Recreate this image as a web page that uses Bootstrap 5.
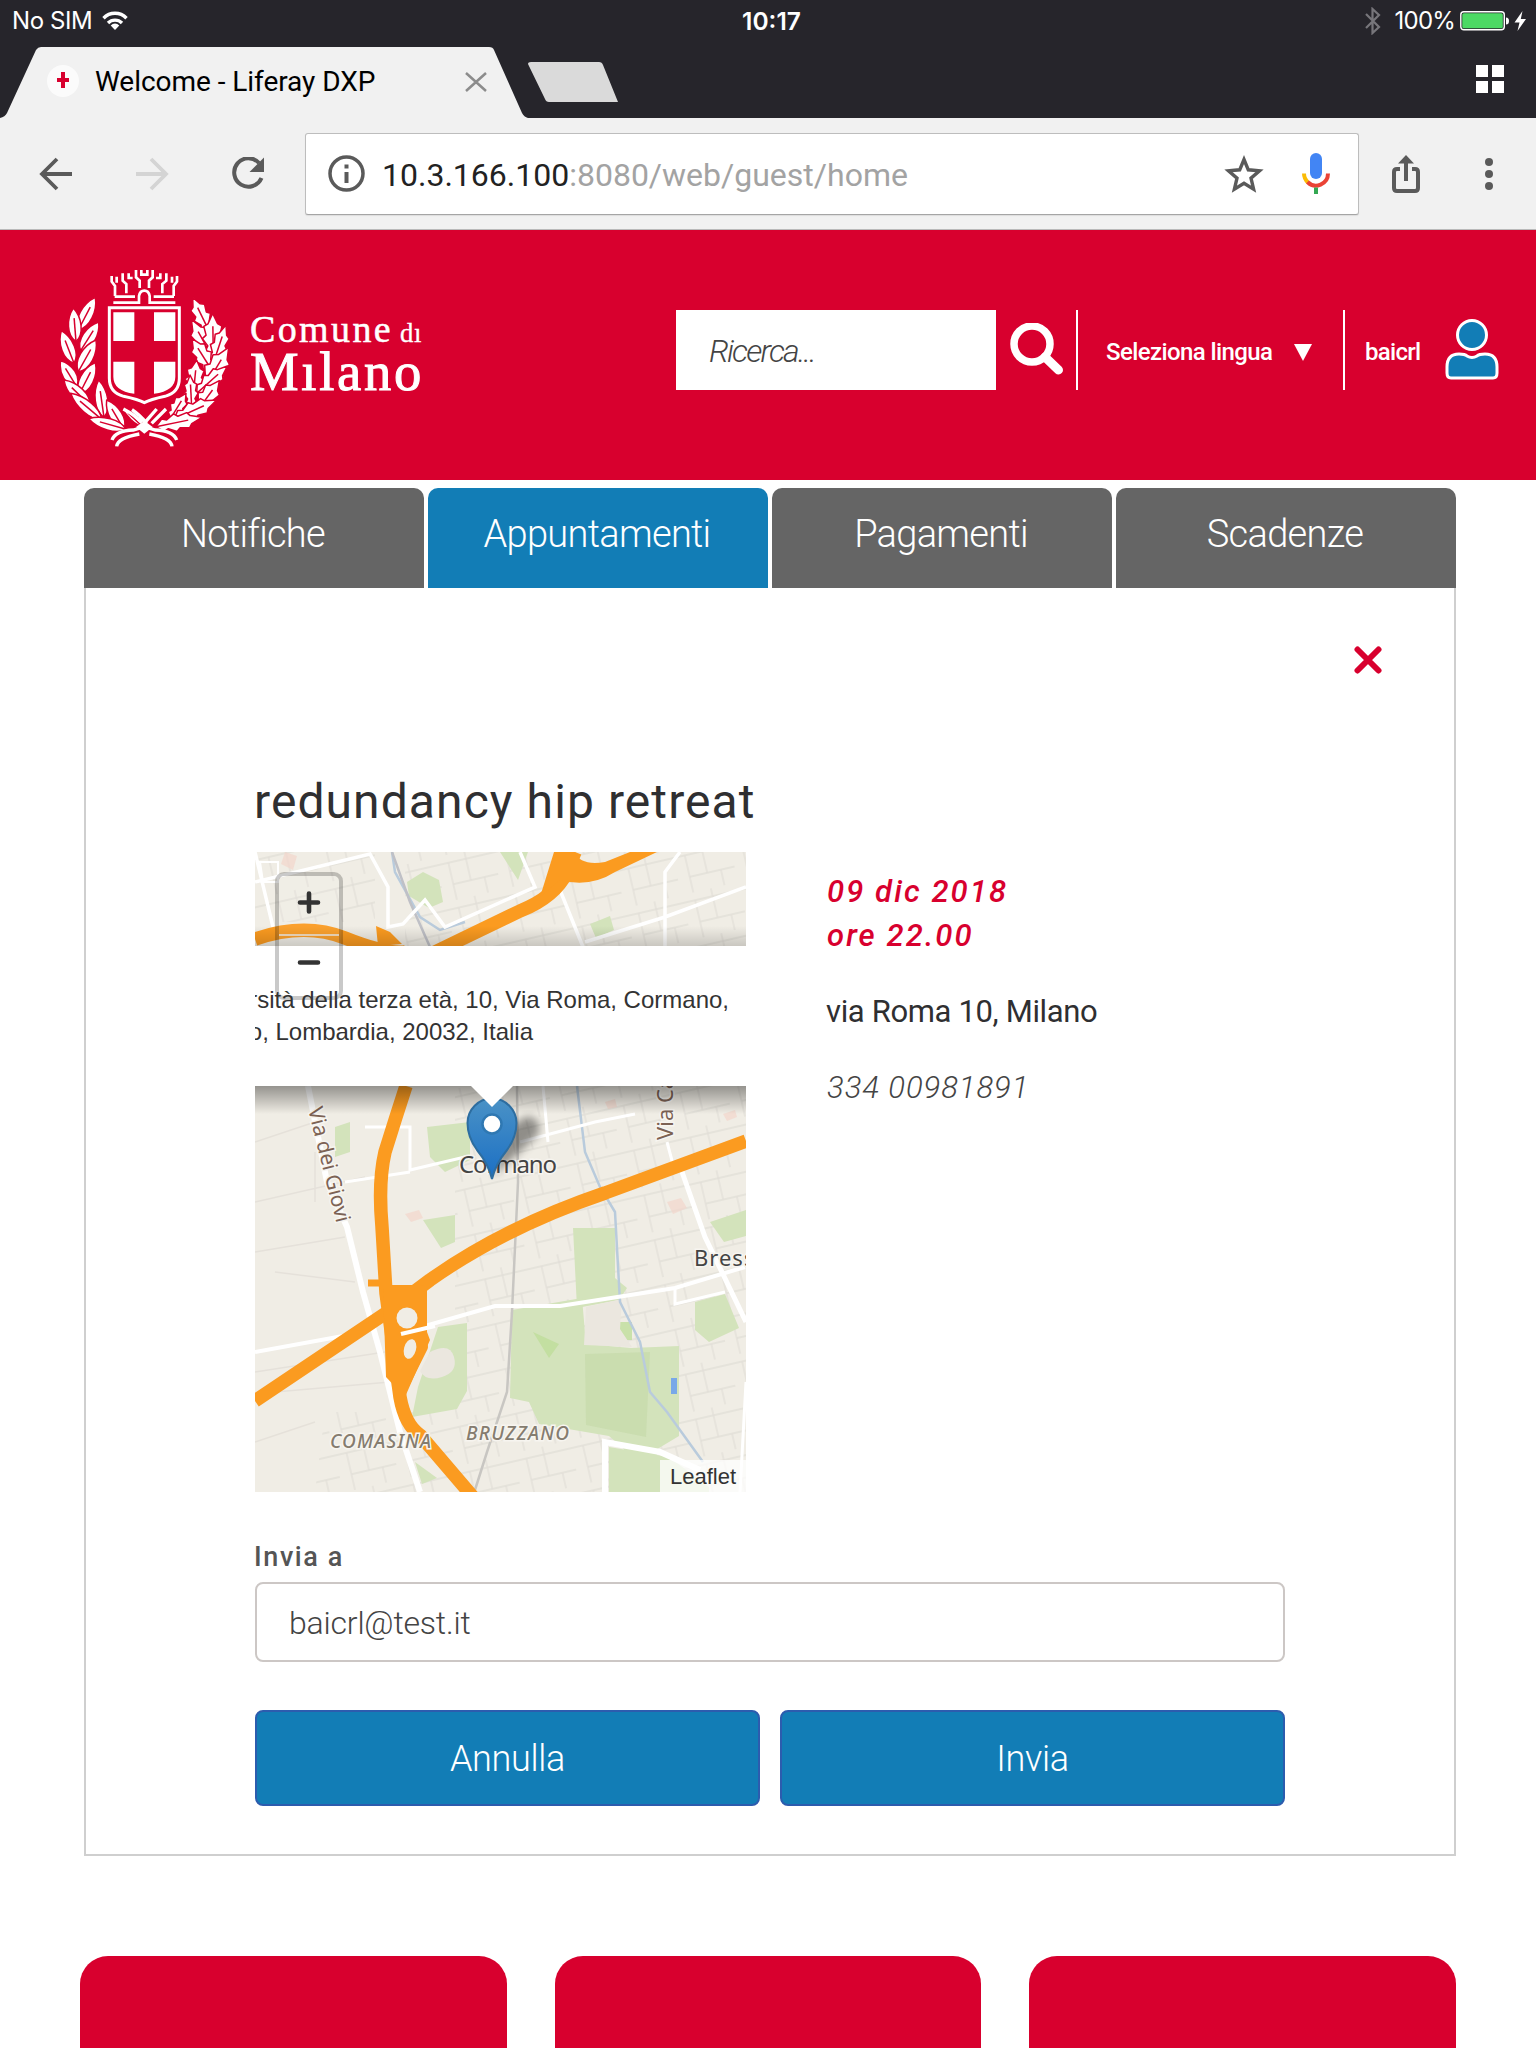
<!DOCTYPE html>
<html lang="it">
<head>
<meta charset="utf-8">
<meta name="viewport" content="width=device-width, initial-scale=1">
<title>Welcome - Liferay DXP</title>
<link href="https://cdn.jsdelivr.net/npm/bootstrap@5.3.0/dist/css/bootstrap.min.css" rel="stylesheet">
<style>
:root{--rosso:#d8002e;--blu:#127db6;--ink:#2f2f31}
body{width:1536px;height:2048px;overflow:hidden;font-family:Roboto,"Open Sans",sans-serif;background:#fff;color:var(--ink)}
svg{display:block;flex:none}
.statusbar{height:42px;background:#26252b;font:400 24px/42px Inter,sans-serif;color:#fff;padding:0 8px 0 12px}
.carrier{letter-spacing:-.4px}
.clock{font-size:24.500px;padding-left:7px}
.charge{letter-spacing:-.8px;margin:0 5px 0 13px}
.tabstrip{height:76px;background:#26252b}
.tab-title{font-size:28px;color:#000;left:95px;top:22px;line-height:36px;letter-spacing:-.05px;white-space:nowrap}
.toolbar{height:112px;background:#f1f1f1;border-bottom:1px solid #b9b9b9}
.omnibox{width:1054px;height:82px;background:#fff;border:1px solid #bdbdbd;border-bottom-color:#a5a5a5;border-radius:3px;margin-left:40px;padding:0 28px 0 22px;box-shadow:0 1px 1px #ddd}
.address{font-size:32px;color:#a3a3a3;margin-left:17px;letter-spacing:0;padding-top:2px}
.address b{font-weight:400;color:#222}
.site-head{height:250px;background:var(--rosso);color:#fff}
.searchbox{width:320px;height:80px;border:0;border-radius:0;background:#fff;font-size:32px;font-weight:300;font-style:italic;color:#444;padding:2px 33px 0;letter-spacing:-1.8px}
.searchbox::placeholder{color:#444;opacity:1}
.rule-v{width:2px;height:80px;background:#fff}
.head-txt{font-size:24px;font-weight:500;white-space:nowrap;padding-top:3px}
.tabs-main{padding:8px 80px 0 84px;gap:4px}
.tabs-main .nav-link{width:340px;height:100px;border-radius:10px 10px 0 0;background:#656565;color:#fff;font-size:38px;font-weight:300;padding:0 2px 8px 0;display:flex;align-items:center;justify-content:center;letter-spacing:-.7px}
.tabs-main .nav-link.active{background:var(--blu);color:#fff}
.panel{margin:0 80px 0 84px;border:2px solid #cfcfcf;border-top:0;height:1268px;padding:58px 169px 48px}
.close-row{margin-right:-97px}
.panel h1{font-size:48px;line-height:60px;font-weight:400;margin:98px 0 20px -1px;letter-spacing:1.08px;color:var(--ink)}
.details{margin-left:81px;padding-top:18px;font-size:31px;line-height:44px;white-space:nowrap}
.when{color:var(--rosso);font-weight:500;font-style:italic;letter-spacing:2.1px;margin-bottom:32px}
.where{margin-bottom:32px;letter-spacing:-.35px;margin-left:-1px}
.phone{font-style:italic;font-weight:300;color:#444;letter-spacing:.95px}
.panel label{font-size:27px;line-height:34px;font-weight:500;color:#555;margin:48px 0 8px -1px;letter-spacing:1.6px}
.mail{height:80px;border:2px solid #ccc7c5;border-radius:8px;font-size:32px;font-weight:300;color:#444;padding:2px 32px 0;letter-spacing:-.2px}
.btn-blu{height:96px;border:2px solid #2c5cae;border-radius:8px;background:var(--blu);color:#fff;font-size:36px;font-weight:300;letter-spacing:-.3px;padding-top:8px}
.tiles{margin-top:100px;padding:0 80px;gap:48px}
.tile{flex:1;height:92px;background:var(--rosso);border-radius:28px 28px 0 0}
.map-svg text{font-family:"Noto Sans",sans-serif}
.map-svg .ui-t{font-family:"Liberation Sans",sans-serif}
</style>
<script src="https://cdn.jsdelivr.net/npm/bootstrap@5.3.0/dist/js/bootstrap.bundle.min.js"></script>
</head>
<body>
<div class="statusbar d-flex align-items-center position-relative">
  <span class="carrier">No SIM</span>
  <svg style="margin-left:10px" width="26" height="20" viewBox="0 0 26 20" fill="none" stroke="#fff" stroke-width="3.4"><path d="M1.5 7.2a16 16 0 0 1 23 0M6 12a10 10 0 0 1 14 0"/><path d="M13 19l-4.3-4.6a6 6 0 0 1 8.600 0z" fill="#fff" stroke="none"/></svg>
  <span class="clock position-absolute start-50 translate-middle-x fw-semibold">10:17</span>
  <svg class="ms-auto" width="18" height="28" viewBox="0 0 18 28" fill="none" stroke="#77767b" stroke-width="2.200"><path d="M2 7l13 13-6.500 6V2l6.500 6L2 21"/></svg>
  <span class="charge">100%</span>
  <svg width="68" height="24" viewBox="0 0 68 24"><rect x=".8" y="2.800" width="43.500" height="18" rx="3" fill="none" stroke="#fff" stroke-width="1.400"/><rect x="2.300" y="4.300" width="40.500" height="15" rx="1.500" fill="#4cd964"/><path d="M46 8.500q3 0 3 3.500t-3 3.500z" fill="#fff"/><path d="M62.500 2L54.500 13.500h5l-2 8.500 8.500-12h-5.200z" fill="#fff"/></svg>
</div>
<div class="tabstrip position-relative">
  <svg width="1536" height="76" viewBox="0 42 1536 76">
    <path d="M0 118q5-1 7-5L36 50q2-3 5-3H489q4 0 5 3L522 113q2 4 6 5z" fill="#f1f1f1"/>
    <path d="M531 62H599q3 0 4 3L618 102H549q-3 0-4-3L528 64q0-2 3-2z" fill="#dadada"/>
    <path d="M466 73L486 91M486 73L466 91" stroke="#8c8c8c" stroke-width="2.500"/>
    <circle cx="63" cy="81" r="16" fill="#fbfbfb"/><path d="M57 80H69M63 72V88" stroke="#d8002e" stroke-width="4"/>
    <path d="M1476 65h12v12h-12zM1492 65h12v12h-12zM1476 81h12v12h-12zM1492 81h12v12h-12z" fill="#fff"/>
  </svg>
  <span class="tab-title position-absolute">Welcome - Liferay DXP</span>
</div>
<div class="toolbar d-flex align-items-center">
  <svg style="margin-left:39px" width="34" height="34" viewBox="0 0 34 34" fill="none" stroke="#5a5a5a" stroke-width="3.800"><path d="M33 17H3M18 2L3 17l15 15"/></svg>
  <svg style="margin-left:62px" width="34" height="34" viewBox="0 0 34 34" fill="none" stroke="#d4d4d4" stroke-width="3.800"><path d="M1 17H31M16 2l15 15-15 15"/></svg>
  <svg style="margin-left:62px" width="34" height="34" viewBox="0 0 34 34"><path d="M28 6A14.200 14.200 0 1 0 30.500 21" fill="none" stroke="#5a5a5a" stroke-width="4"/><path d="M33 0.500v14.500H18.500z" fill="#5a5a5a"/></svg>
  <div class="omnibox d-flex align-items-center">
    <svg width="37" height="37" viewBox="0 0 37 37"><circle cx="18.500" cy="18.500" r="16.500" fill="none" stroke="#5a5a5a" stroke-width="3.500"/><path d="M16.500 17h4v11h-4zM16.500 9.500h4v4h-4z" fill="#5a5a5a"/></svg>
    <span class="address"><b>10.3.166.100</b>:8080/web/guest/home</span>
    <svg class="ms-auto" width="40" height="38" viewBox="0 0 40 38"><path d="M20 4.500l4.300 10.300 11.200 1-8.500 7.400 2.600 10.900-9.600-5.800-9.600 5.800L13 23.200l-8.500-7.400 11.200-1z" fill="none" stroke="#5a5a5a" stroke-width="3.400"/></svg>
    <svg style="margin-left:38px" width="28" height="41" viewBox="0 0 28 41"><rect x="8" y="0" width="12" height="26" rx="6" fill="#4285f4"/><path d="M2 20.500q0 5 4 9" fill="none" stroke="#fbbc05" stroke-width="4"/><path d="M5.500 29A12 12 0 0 0 26 20.500" fill="none" stroke="#ea4335" stroke-width="4"/><path d="M12 34.500h4V41h-4z" fill="#34a853"/></svg>
  </div>
  <svg style="margin-left:33px" width="28" height="38" viewBox="0 0 28 38"><path d="M8 14H5q-3 0-3 3v16q0 3 3 3h18q3 0 3-3V17q0-3-3-3h-3" fill="none" stroke="#5a5a5a" stroke-width="4"/><path d="M14 26V6" stroke="#5a5a5a" stroke-width="4"/><path d="M14 0l8 8.500H6z" fill="#5a5a5a"/></svg>
  <svg style="margin-left:65px" width="8" height="34" viewBox="0 0 8 34" fill="#5a5a5a"><circle cx="4" cy="5" r="4"/><circle cx="4" cy="17" r="4"/><circle cx="4" cy="29" r="4"/></svg>
</div>

<header class="site-head d-flex">
  <svg style="margin:40px 0 0 60px" width="365" height="180" viewBox="30 30 1095 540">
    <g fill="none" stroke="#fff">
      <path d="M178 143H388V355Q388 398 345 409Q300 419 283 428Q266 419 221 409Q178 398 178 355Z" stroke-width="9"/>
      <path d="M190 128H267V108Q270 92 283 92Q296 92 299 108V128H376M194 110H255M311 110H372" stroke-width="8"/>
      <path d="M185 48V65L195 78V108M381 48V65L371 78V108M218 40V62L229 72V100M349 40V62L337 72V100M258 30V52L269 62V84M308 30V52L297 62V84M200 50V68M366 50V68M236 40V54H248M331 40V54H318M274 30V44H292V30" stroke-width="8"/>
    </g>
    <path d="M190 157H253V243H190ZM312 157H376V243H312ZM190 305H253V401Q190 393 190 350ZM312 305H376V350Q376 393 312 401Z" fill="#fff"/>
    <g id="wreath"></g>
    <g fill="none" stroke="#fff" stroke-width="10">
      <path d="M220 447Q255 465 276 488M246 449Q270 465 290 490M320 447L287 485M348 447L305 490M186 540Q196 512 250 510L283 500M200 559Q203 534 268 522M380 540Q370 512 316 510L283 500M366 559Q363 534 298 522"/>
    </g>
    <path d="M283 482l25 19-25 20-25-20z" fill="#fff"/>
    <g fill="#fff" font-family="Liberation Serif,serif">
      <text x="600" y="246" font-size="114" textLength="422" lengthAdjust="spacing" stroke="#fff" stroke-width="1.500">Comune</text>
      <text x="1050" y="246" font-size="80" textLength="64" stroke="#fff" stroke-width="1">dı</text>
      <text x="600" y="391" font-size="164" textLength="514" lengthAdjust="spacing" stroke="#fff" stroke-width="3">Mılano</text>
    </g>
  </svg>
  <div class="d-flex align-items-center" style="height:80px;margin:80px 0 0 251px">
    <input class="searchbox" type="text" placeholder="Ricerca...">
    <svg style="margin-left:14px" width="54" height="54" viewBox="0 0 54 54" fill="none" stroke="#fff"><circle cx="22" cy="21" r="18" stroke-width="7.500"/><path d="M35 34L48.500 47" stroke-width="9" stroke-linecap="round"/></svg>
    <div class="rule-v" style="margin-left:12px"></div>
    <span class="head-txt" style="margin-left:28px;letter-spacing:-.6px;width:166px">Seleziona lingua</span>
    <svg style="margin:4px 0 0 22px" width="18" height="17" viewBox="0 0 18 17"><path d="M0 0h18L9 17z" fill="#fff"/></svg>
    <div class="rule-v" style="margin-left:31px"></div>
    <span class="head-txt" style="margin-left:20px;letter-spacing:-.7px;width:56px">baicrl</span>
    <svg style="margin-left:24px" width="54" height="62" viewBox="0 0 54 62" fill="#127db6" stroke="#fff" stroke-width="3"><circle cx="27" cy="16" r="14.500"/><path d="M2 54V48Q2 35 14 35Q20 35 22 37Q27 40 32 37Q34 35 40 35Q52 35 52 48V54Q52 59 48 59H6Q2 59 2 54Z"/></svg>
  </div>
</header>

<nav class="nav tabs-main flex-nowrap">
  <a class="nav-link" href="#">Notifiche</a>
  <a class="nav-link active" href="#">Appuntamenti</a>
  <a class="nav-link" href="#">Pagamenti</a>
  <a class="nav-link" href="#">Scadenze</a>
</nav>
<main class="panel">
  <div class="close-row d-flex justify-content-end">
    <svg width="28" height="28" viewBox="0 0 28 28"><path d="M3.500 3.500l21 21M24.500 3.500l-21 21" stroke="#d8002e" stroke-width="6" stroke-linecap="round"/></svg>
  </div>
  <h1>redundancy hip retreat</h1>
  <div class="d-flex">
    <svg class="map-svg" width="491" height="640" viewBox="0 0 491 640">
      <defs>
        <linearGradient id="pin" x1="0" y1="0" x2="0" y2="1"><stop offset="0" stop-color="#4a92c6"/><stop offset="1" stop-color="#1b6fc4"/></linearGradient>
        <linearGradient id="shd" x1="0" y1="0" x2="0" y2="1"><stop offset="0" stop-color="#000" stop-opacity=".38"/><stop offset="1" stop-color="#000" stop-opacity="0"/></linearGradient>
        <linearGradient id="shu" x1="0" y1="1" x2="0" y2="0"><stop offset="0" stop-color="#000" stop-opacity=".16"/><stop offset="1" stop-color="#000" stop-opacity="0"/></linearGradient>
        <filter id="soft"><feGaussianBlur stdDeviation="4"/></filter>
        <pattern id="blocks" width="58" height="46" patternUnits="userSpaceOnUse" patternTransform="rotate(-13)"><path d="M0 8H58M12 8V46M30 0V30M12 30H58M44 30V46" fill="none" stroke="#e2dfd8" stroke-width="1.300"/></pattern>
      </defs>
      <path d="M0 0H491V640H0z" fill="#f0ede5"/>
      <path d="M150 0H491V95H150zM0 0H120V70H0zM200 234H491V640H200zM70 560H200V640H60z" fill="url(#blocks)"/>
      <path d="M0 290L60 270M0 350L110 325M0 400L90 385M20 420L100 430M0 520L130 500M20 540L135 530M0 590L60 570M60 300V350" stroke="#e5e1da" stroke-width="1.500" fill="none"/>
      <g fill="#f2d5cc" opacity=".7"><path d="M30 0l12 4-4 14-12-6zM412 350l14-4 6 10-14 6zM150 362l14-4 4 8-12 4zM350 250l10-3 2 8-9 2zM468 262l12-4 2 7-10 4z"/></g>
      <g fill="#d3e3bb">
        <path d="M152 30l16-10 16 8 4 22-14 6-20-12zM245 0h28l-10 28zM335 72l20-8 4 14-18 8zM80 275l15-5v30l-15 5zM172 275l43-5v38l-25 12-15-15zM168 368l32-5v27l-14 6zM318 376h42v50l12 10-8 12-42 8z"/>
        <path d="M257 458l70-12 4 46 45 4 48-2v90l-25 15 40 45-40-20-45-40-70-12-10-22-19-4zM183 475l29-4v68l-10 18-45 8 6-30zM160 610l22 16-15 6zM354 595l60 10 40 30v5H354zM440 450l30-8 14 34-30 14-14-12zM455 370l36-12v26l-22 6z"/>
      </g>
      <path d="M330 502l65-2-4 85-60-12z" fill="#c8dbac" opacity=".8"/><path d="M365 470h12v18h-12zM278 480l26 12-10 14z" fill="#bfdd9b" opacity=".8"/>
      <g fill="#ebe7df"><path d="M175 500q20-10 24 5t-12 20-22-6z"/><path d="M331 455l36-8 -2 30 12 18-48-2z"/></g>
      <path d="M416 526h6v16h-6z" fill="#78a8e8"/>
      <g fill="none" stroke="#b9cbdc" stroke-width="2.500">
        <path d="M137 0L140 20L165 65L185 78L210 70M322 234L330 300L345 335L360 360L365 450L385 490L395 540L412 560L430 585L448 610"/>
        <path d="M137 0L155 50L175 95" stroke="#bfc0c6"/>
        <path d="M262 234L263 330L257 460L252 540L232 600L220 638" stroke="#c8c6c2"/>
      </g>
      <g fill="none" stroke="#fff" stroke-width="4">
        <path d="M53 234L72 330L92 375L108 440L125 500L145 580L165 640" stroke-width="6"/>
        <path d="M0 500L110 480M142 482L240 454L305 454L420 436L490 415" stroke-width="4"/>
        <path d="M0 0L18 75M0 30L115 2L133 35V75L148 72L170 48L190 75L280 35L265 0M305 38L328 95M330 90L410 65L491 35M410 95V20L425 0" stroke-width="3.500"/>
        <path d="M110 275H155V318L210 305M155 320L90 330M265 290L340 270L380 262M420 436V452L470 440M288 234L293 290M412 290L420 320M491 530L485 640" stroke-width="3"/>
        <path d="M426 317L450 385L491 470" stroke-width="5"/>
        <path d="M350 640V590L405 600L445 618" stroke-width="6"/>
        <path d="M5 10h18v20H8z" stroke-width="2"/>
      </g>
      <g fill="none" stroke="#fb9b20" stroke-width="13.500" stroke-linejoin="round">
        <path d="M0 87Q50 70 90 86T150 100M180 100L265 59Q300 45 312 20L320 0"/>
        <path d="M151 234L141 265L130 300Q123 330 127 375L131 441L141 515L145 545Q150 573 165 583L218 645"/>
        <path d="M0 549L131 461L175 428Q250 375 350 341L491 289"/>
        <path d="M113 431H128" stroke-width="7"/>
        <path d="M136 438H166V480L168 495L148 535" stroke-width="10"/>
      </g>
      <path d="M299 0H320Q325 14 350 10L375 0H402L360 20Q335 36 305 28L285 45zM121 74l14 6 12 12-24 2z" fill="#fb9b20"/>
      <path d="M128 436H172V480L175 488 150 545 131 525z" fill="#fb9b20"/>
      <circle cx="152" cy="466" r="10.500" fill="#f0ede5"/><ellipse cx="155" cy="497" rx="6" ry="10" fill="#f0ede5" transform="rotate(15 155 497)"/>
      <path d="M146 482L180 474" stroke="#fff" stroke-width="4"/>
      <g fill="#514d49" stroke="#f7f5f0" stroke-width="3" paint-order="stroke">
        <text x="204" y="321" font-size="24" textLength="98" fill="#444">Cormano</text>
        <text x="439" y="414" font-size="22" fill="#444" letter-spacing="1">Bresso</text>
        <text font-size="21" transform="translate(53 257) rotate(76)" textLength="118" fill="#7c6254">Via dei Giovi</text>
        <text font-size="22" transform="translate(418 288) rotate(-90)" fill="#7c6254">Via Cavour</text>
        <text x="75" y="596" font-size="19" font-style="italic" font-weight="500" textLength="101" fill="#857c6f">COMASINA</text>
        <text x="211" y="588" font-size="19" font-style="italic" font-weight="500" textLength="103" fill="#857c6f">BRUZZANO</text>
      </g>
      <path d="M0 74H491V94H0z" fill="url(#shu)"/><path d="M0 234H491V262H0z" fill="url(#shd)"/>
      <path d="M238 324l12-46 22-14q18 4 10 20z" fill="#000" opacity=".4" filter="url(#soft)"/>
      <path d="M237 327Q233.500 312 222 298Q212.500 285 212.500 271A24.500 24.500 0 0 1 261.500 271Q261.500 285 252 298Q240.500 312 237 327Z" fill="url(#pin)" stroke="#2d6da0" stroke-width="2"/>
      <circle cx="237" cy="272" r="9.500" fill="#fff" stroke="#2f78b2" stroke-width="2.500"/>
      <path d="M0 94H491V234H258L237 255 216 234H0z" fill="#fff"/>
      <rect x="22" y="22" width="64" height="124" rx="7" fill="#fff" fill-opacity=".06" stroke="#000" stroke-opacity=".21" stroke-width="4"/>
      <path d="M24 83H84" stroke="#ddd" stroke-opacity=".75" stroke-width="2"/>
      <path d="M45 50.500H63M54 41.500V59.500M45 110.500H63" stroke="#333" stroke-width="4.600" stroke-linecap="round"/>
      <g fill="#333" font-size="24"><text class="ui-t" x="474" y="156" text-anchor="end">Università della terza età, 10, Via Roma, Cormano,</text>
      <text class="ui-t" x="278" y="188" text-anchor="end">Milano, Lombardia, 20032, Italia</text></g>
      <path d="M405 608H491V640H405z" fill="#fff" opacity=".75"/><text class="ui-t" x="415" y="632" font-size="22" textLength="66" fill="#333">Leaflet</text>
    </svg>
    <div class="details">
      <div class="when">09 dic 2018<br>ore 22.00</div>
      <div class="where">via Roma 10, Milano</div>
      <div class="phone">334 00981891</div>
    </div>
  </div>
  <label class="d-block" for="mail">Invia a</label>
  <input id="mail" class="form-control mail" type="text" value="baicrl@test.it">
  <div class="d-flex mt-5" style="gap:20px">
    <button class="btn btn-blu flex-fill w-50">Annulla</button>
    <button class="btn btn-blu flex-fill w-50">Invia</button>
  </div>
</main>
<section class="tiles d-flex"><div class="tile"></div><div class="tile"></div><div class="tile"></div></section>
<script>
// Wreath leaves: base x, base y, tip x, tip y, half width
const laurel=[[85,210,136,112,25],[78,245,70,144,24],[92,272,146,186,25],[72,310,34,212,25],[85,335,138,240,26],[80,380,32,302,25],[88,402,136,308,26],[120,436,42,360,24],[162,472,146,360,24],[155,478,62,400,22],[222,508,170,420,24],[228,508,116,476,22],[276,498,216,442,11]];
const oak=[[478,215,428,112,27],[492,300,424,178,30],[490,290,488,160,32],[490,310,528,195,26],[485,330,426,236,28],[462,385,536,262,34],[430,402,440,300,30],[440,400,532,318,26],[425,440,420,345,22],[440,455,508,362,30],[362,475,408,400,24],[372,478,500,420,28],[318,500,456,472,27]];
let out='';
for(const [list,jag] of [[laurel,false],[oak,true]])for(const [x,y,u,v,w] of list){
  const L=Math.hypot(u-x,v-y),a=Math.atan2(v-y,u-x)*180/Math.PI;
  const d=jag?`M0 0L${L*.15} ${-w*.7} ${L*.25} ${-w*.5} ${L*.42} ${-w} ${L*.5} ${-w*.65} ${L*.7} ${-w*.85} ${L*.76} ${-w*.45} ${L} 0 ${L*.76} ${w*.45} ${L*.7} ${w*.85} ${L*.5} ${w*.65} ${L*.42} ${w} ${L*.25} ${w*.5} ${L*.15} ${w*.7}Z`:`M0 0C${L*.2} ${-w*1.1} ${L*.7} ${-w} ${L} 0C${L*.7} ${w} ${L*.2} ${w*1.1} 0 0Z`;
  out+=`<g transform="translate(${x} ${y}) rotate(${a})"><path d="${d}" fill="#fff" stroke="#d8002e" stroke-width="4.500" stroke-linejoin="round"/><path d="M0 0H${L*.7}" stroke="#d8002e" stroke-width="4.500"/></g>`;
}
document.getElementById('wreath').innerHTML=out;
</script>
</body>
</html>
